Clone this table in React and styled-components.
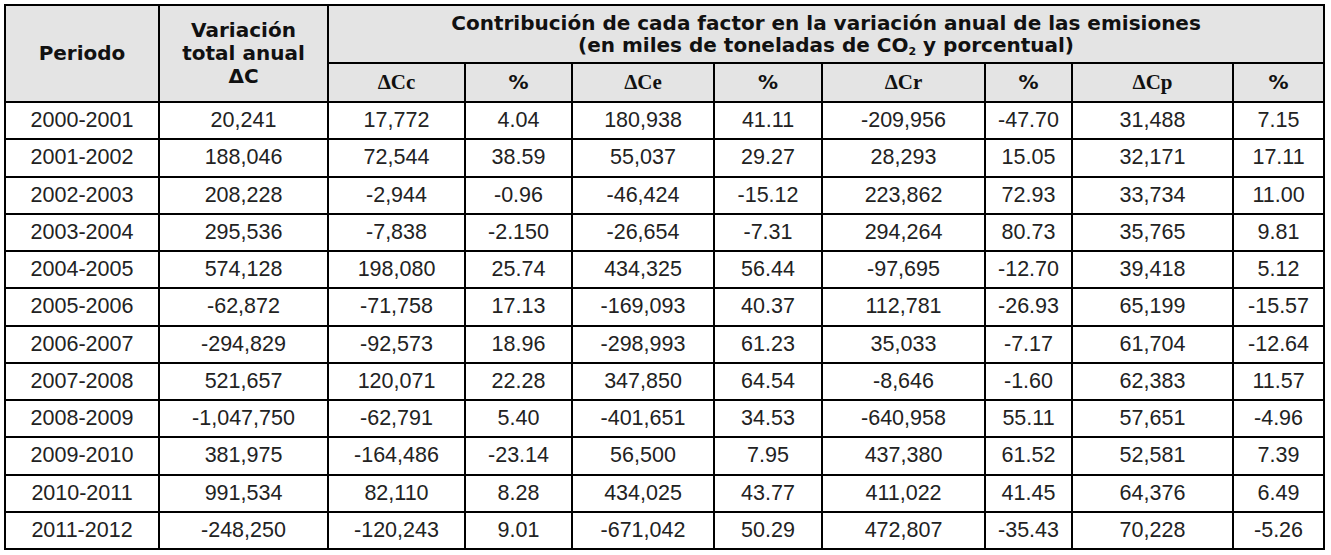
import React from "react";
import styled, { createGlobalStyle } from "styled-components";

const Global = createGlobalStyle`
  html, body { margin: 0; padding: 0; background: #fff; }
  body { padding: 4px 0 0 4px; font-family: "Liberation Sans", Arial, sans-serif; color: #111; }
`;

const Table = styled.table`
  border-collapse: collapse;
  table-layout: fixed;
  width: 1321px;
  border: 2px solid #000;
`;

const Th = styled.th`
  background: #e4e4e4;
  border: 2px solid #000;
  font-family: ${(p) => (p.$serif ? '"Liberation Serif", "Times New Roman", serif' : '"DejaVu Sans", Verdana, sans-serif')};
  font-weight: bold;
  font-size: ${(p) => (p.$serif ? "21px" : "20px")};
  line-height: ${(p) => (p.$tight ? "22px" : "23px")};
  text-align: center;
  vertical-align: middle;
  padding: 0 2px;
  color: #111;
  white-space: nowrap;
`;

const TopRow = styled.tr`
  height: 58px;
`;

const SubRow = styled.tr`
  height: 39px;
`;

const Row = styled.tr`
  height: 37.25px;
`;

const Td = styled.td`
  border: 2px solid #000;
  text-align: center;
  vertical-align: middle;
  font-size: 21.5px;
  padding: 0 2px;
  color: #222;
  white-space: nowrap;
`;

const Sub = styled.sub`
  font-size: 11px;
  vertical-align: -3px;
  line-height: 0;
`;

const widths = [154, 169, 137, 107, 142, 108, 163, 87, 161, 91];

const rows = [
  ["2000-2001", "20,241", "17,772", "4.04", "180,938", "41.11", "-209,956", "-47.70", "31,488", "7.15"],
  ["2001-2002", "188,046", "72,544", "38.59", "55,037", "29.27", "28,293", "15.05", "32,171", "17.11"],
  ["2002-2003", "208,228", "-2,944", "-0.96", "-46,424", "-15.12", "223,862", "72.93", "33,734", "11.00"],
  ["2003-2004", "295,536", "-7,838", "-2.150", "-26,654", "-7.31", "294,264", "80.73", "35,765", "9.81"],
  ["2004-2005", "574,128", "198,080", "25.74", "434,325", "56.44", "-97,695", "-12.70", "39,418", "5.12"],
  ["2005-2006", "-62,872", "-71,758", "17.13", "-169,093", "40.37", "112,781", "-26.93", "65,199", "-15.57"],
  ["2006-2007", "-294,829", "-92,573", "18.96", "-298,993", "61.23", "35,033", "-7.17", "61,704", "-12.64"],
  ["2007-2008", "521,657", "120,071", "22.28", "347,850", "64.54", "-8,646", "-1.60", "62,383", "11.57"],
  ["2008-2009", "-1,047,750", "-62,791", "5.40", "-401,651", "34.53", "-640,958", "55.11", "57,651", "-4.96"],
  ["2009-2010", "381,975", "-164,486", "-23.14", "56,500", "7.95", "437,380", "61.52", "52,581", "7.39"],
  ["2010-2011", "991,534", "82,110", "8.28", "434,025", "43.77", "411,022", "41.45", "64,376", "6.49"],
  ["2011-2012", "-248,250", "-120,243", "9.01", "-671,042", "50.29", "472,807", "-35.43", "70,228", "-5.26"],
];

const subHeads = [
  ["\u0394Cc", true],
  ["%", false],
  ["\u0394Ce", true],
  ["%", false],
  ["\u0394Cr", true],
  ["%", false],
  ["\u0394Cp", true],
  ["%", false],
];

export default function App() {
  return (
    <>
      <Global />
      <Table>
        <colgroup>
          {widths.map((w, i) => (
            <col key={i} style={{ width: w }} />
          ))}
        </colgroup>
        <thead>
          <TopRow>
            <Th rowSpan={2}>Periodo</Th>
            <Th rowSpan={2}>
              Variación
              <br />
              total anual
              <br />
              ΔC
            </Th>
            <Th colSpan={8} $tight>
              Contribución de cada factor en la variación anual de las emisiones
              <br />
              (en miles de toneladas de CO<Sub>2</Sub> y porcentual)
            </Th>
          </TopRow>
          <SubRow>
            {subHeads.map(([t, serif], i) => (
              <Th key={i} $serif={serif}>
                {t}
              </Th>
            ))}
          </SubRow>
        </thead>
        <tbody>
          {rows.map((r, i) => (
            <Row key={i}>
              {r.map((c, j) => (
                <Td key={j}>{c}</Td>
              ))}
            </Row>
          ))}
        </tbody>
      </Table>
    </>
  );
}
